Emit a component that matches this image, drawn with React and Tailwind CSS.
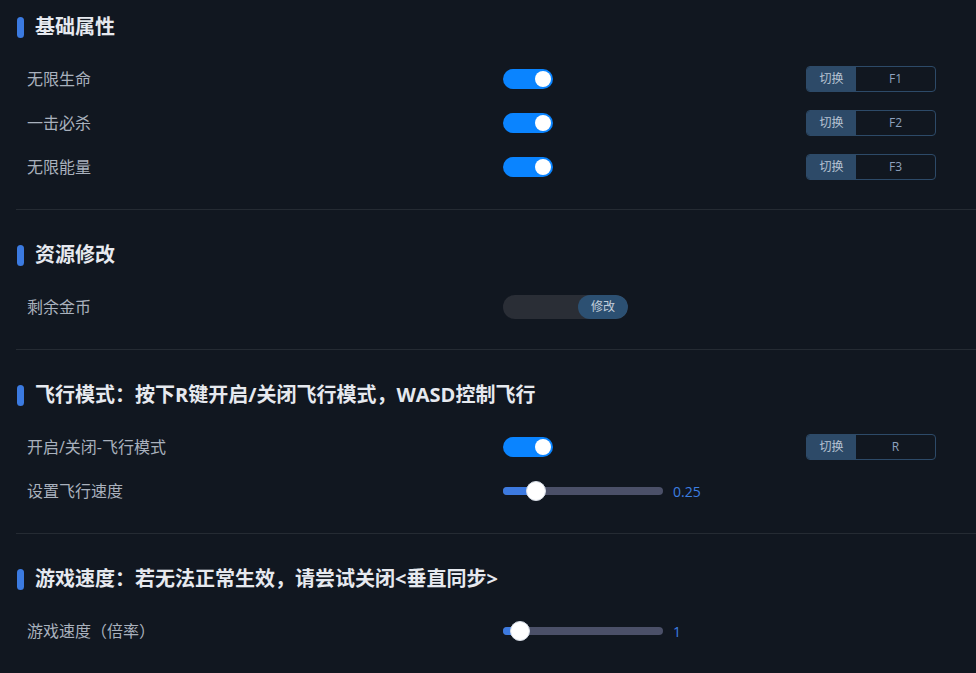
import React, { useState } from "react";

const font = { fontFamily: '"Open Sans", "Noto Sans CJK SC", sans-serif' };

const Toggle = ({ on, onChange }) => (
  <button
    onClick={onChange}
    className={`w-[50px] h-[20px] rounded-full p-[2px] flex items-center ${
      on ? "bg-[#0a84ff] justify-end" : "bg-[#3a3f4a] justify-start"
    }`}
  >
    <span className="block w-[16px] h-[16px] rounded-full bg-white"></span>
  </button>
);

const HotKey = ({ keyName }) => (
  <div className="flex h-[26px] w-[130px] rounded-[4px] border border-[#2d4a68] overflow-hidden text-[12px]">
    <div className="w-[49px] bg-[#2d4a68] text-[#b7c3d3] flex items-center justify-center">
      切换
    </div>
    <div className="flex-1 text-[#8ea2bf] flex items-center justify-center">
      {keyName}
    </div>
  </div>
);

const Slider = ({ percent, value }) => (
  <div className="flex items-center">
    <div className="relative w-[160px] h-[8px] rounded-full bg-[#4b5068]">
      <div
        className="absolute left-0 top-0 h-[8px] rounded-full bg-[#3d7ae0]"
        style={{ width: `${percent}%` }}
      ></div>
      <div
        className="absolute top-1/2 w-[20px] h-[20px] -mt-[10px] -ml-[10px] rounded-full bg-white border border-[#d7dde6]"
        style={{ left: `${percent}%` }}
      ></div>
    </div>
    <span className="ml-[10px] text-[14px] text-[#3d7fe0]">{value}</span>
  </div>
);

const Section = ({ title, first, last, children }) => (
  <div
    className={`${first ? "pt-[11px]" : "pt-[29px]"} ${
      last ? "" : "pb-5 border-b border-[#252b33]"
    } ml-4`}
  >
    <div className="h-8 flex items-center pl-px">
      <span className="w-[7px] h-[21px] rounded-full bg-[#3b7ae0]"></span>
      <span className="ml-[11px] text-[20px] font-bold text-[#e6e9ef]">
        {title}
      </span>
    </div>
    <div className="mt-[14px]">{children}</div>
  </div>
);

const Row = ({ label, children, right }) => (
  <div className="h-[44px] flex items-center pl-[11px] pr-[40px]">
    <div className="w-[476px] text-[16px] text-[#a9b1bd]">{label}</div>
    <div className="flex-1">{children}</div>
    {right}
  </div>
);

export default function App() {
  const [flags, setFlags] = useState({ life: true, kill: true, energy: true, fly: true });
  const flip = (k) => setFlags((p) => ({ ...p, [k]: !p[k] }));

  return (
    <div className="w-[976px] h-[673px] bg-[#111720] overflow-hidden" style={font}>
      <Section title="基础属性" first>
        <Row label="无限生命" right={<HotKey keyName="F1" />}>
          <Toggle on={flags.life} onChange={() => flip("life")} />
        </Row>
        <Row label="一击必杀" right={<HotKey keyName="F2" />}>
          <Toggle on={flags.kill} onChange={() => flip("kill")} />
        </Row>
        <Row label="无限能量" right={<HotKey keyName="F3" />}>
          <Toggle on={flags.energy} onChange={() => flip("energy")} />
        </Row>
      </Section>

      <Section title="资源修改">
        <Row label="剩余金币">
          <div className="flex w-[125px] h-[24px] rounded-full bg-[#2a2e36] overflow-hidden">
            <input className="flex-1 min-w-0 bg-transparent outline-none px-3 text-[12px] text-[#c9d1db]" />
            <button className="w-[50px] rounded-full bg-[#2c5072] text-[12px] text-[#c3cedb]">
              修改
            </button>
          </div>
        </Row>
      </Section>

      <Section title="飞行模式：按下R键开启/关闭飞行模式，WASD控制飞行">
        <Row label="开启/关闭-飞行模式" right={<HotKey keyName="R" />}>
          <Toggle on={flags.fly} onChange={() => flip("fly")} />
        </Row>
        <Row label="设置飞行速度">
          <Slider percent={20.5} value="0.25" />
        </Row>
      </Section>

      <Section title="游戏速度：若无法正常生效，请尝试关闭<垂直同步>" last>
        <Row label="游戏速度（倍率）">
          <Slider percent={10.5} value="1" />
        </Row>
      </Section>
    </div>
  );
}
